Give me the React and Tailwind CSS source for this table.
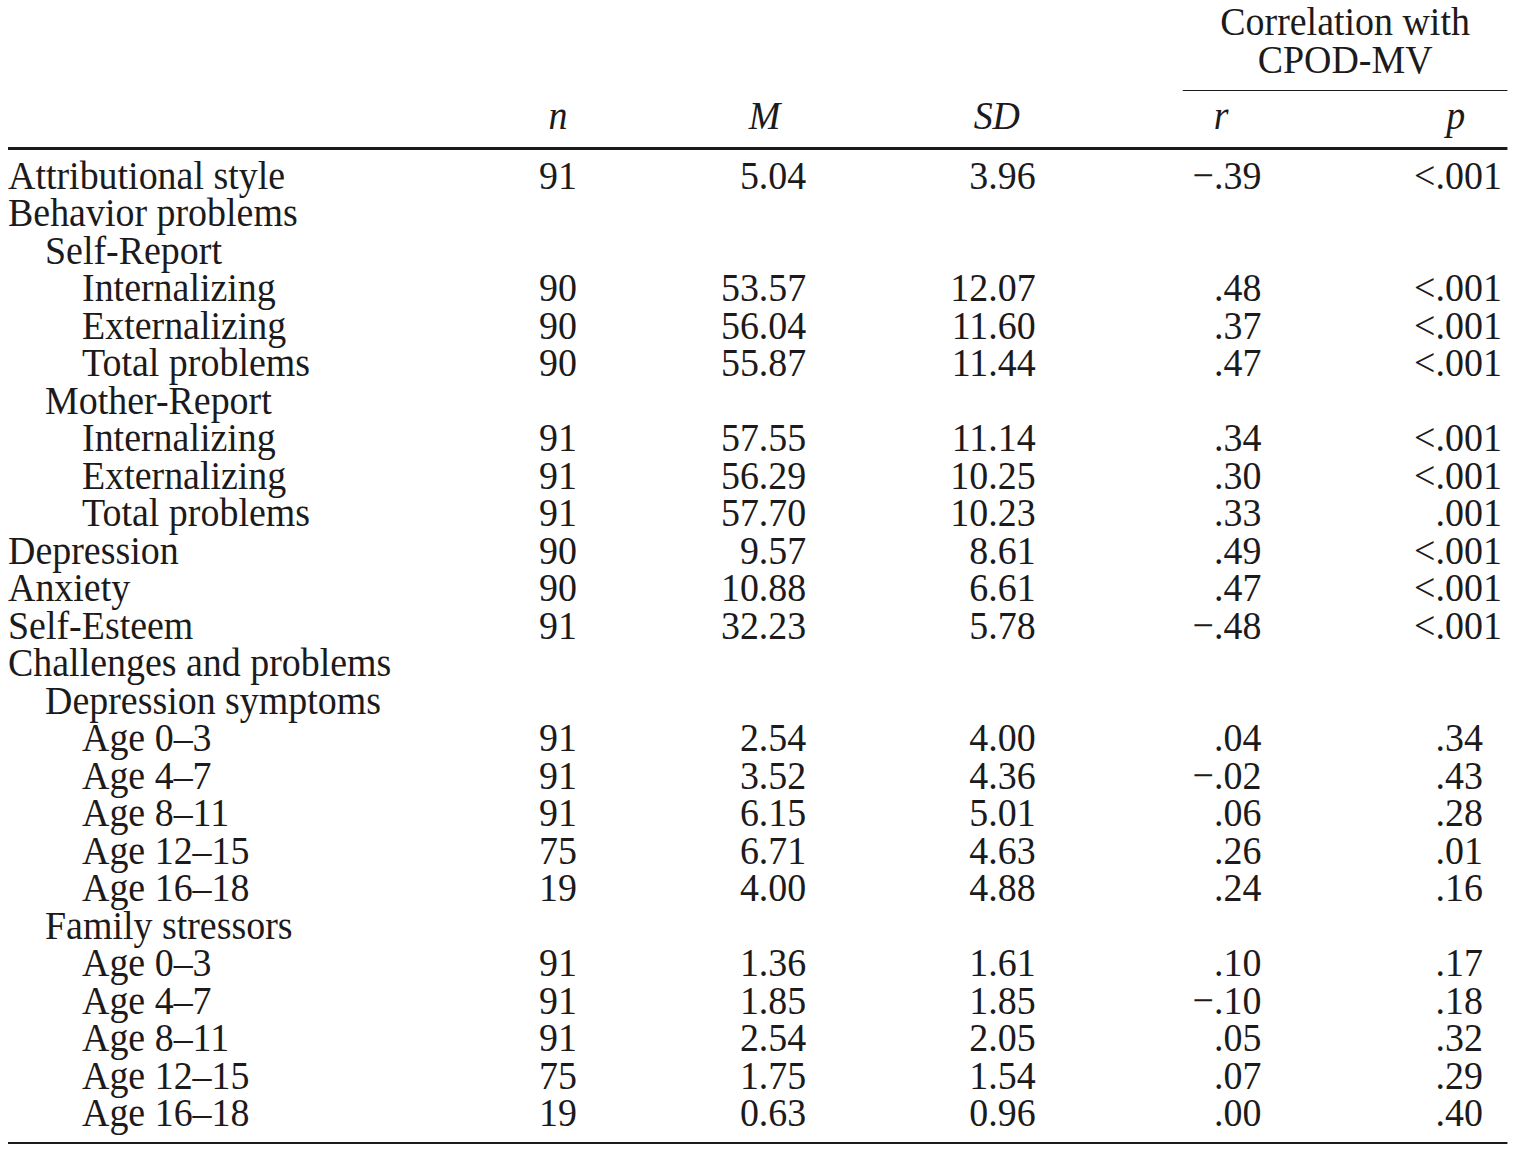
const rows = [
  ["Attributional style", 0, "91", "5.04", "3.96", "−.39", "<.001"],
  ["Behavior problems", 0],
  ["Self-Report", 1],
  ["Internalizing", 2, "90", "53.57", "12.07", ".48", "<.001"],
  ["Externalizing", 2, "90", "56.04", "11.60", ".37", "<.001"],
  ["Total problems", 2, "90", "55.87", "11.44", ".47", "<.001"],
  ["Mother-Report", 1],
  ["Internalizing", 2, "91", "57.55", "11.14", ".34", "<.001"],
  ["Externalizing", 2, "91", "56.29", "10.25", ".30", "<.001"],
  ["Total problems", 2, "91", "57.70", "10.23", ".33", ".001"],
  ["Depression", 0, "90", "9.57", "8.61", ".49", "<.001"],
  ["Anxiety", 0, "90", "10.88", "6.61", ".47", "<.001"],
  ["Self-Esteem", 0, "91", "32.23", "5.78", "−.48", "<.001"],
  ["Challenges and problems", 0],
  ["Depression symptoms", 1],
  ["Age 0–3", 2, "91", "2.54", "4.00", ".04", ".34"],
  ["Age 4–7", 2, "91", "3.52", "4.36", "−.02", ".43"],
  ["Age 8–11", 2, "91", "6.15", "5.01", ".06", ".28"],
  ["Age 12–15", 2, "75", "6.71", "4.63", ".26", ".01"],
  ["Age 16–18", 2, "19", "4.00", "4.88", ".24", ".16"],
  ["Family stressors", 1],
  ["Age 0–3", 2, "91", "1.36", "1.61", ".10", ".17"],
  ["Age 4–7", 2, "91", "1.85", "1.85", "−.10", ".18"],
  ["Age 8–11", 2, "91", "2.54", "2.05", ".05", ".32"],
  ["Age 12–15", 2, "75", "1.75", "1.54", ".07", ".29"],
  ["Age 16–18", 2, "19", "0.63", "0.96", ".00", ".40"],
];

const indent = ["pl-0", "pl-[40px]", "pl-[80px]"];

function Cell({ width, children, center }) {
  return (
    <div className="flex justify-end">
      <div className={`${width} ${center ? "text-center" : "text-right"}`}>
        {children}
      </div>
    </div>
  );
}

function Row({ label, level, n, m, sd, r, p }) {
  // two-digit p values line up on the decimal point of the .001 ones
  const short = p && !p.includes("001");
  return (
    <div className="grid grid-cols-[500px_115px_248px_248px_244px_266px]">
      <div className={`whitespace-nowrap ${indent[level]}`}>{label}</div>
      <Cell width="w-[41px]">{n}</Cell>
      <Cell width="w-[113px]">{m}</Cell>
      <Cell width="w-[113px]">{sd}</Cell>
      <Cell width="w-[87px]">{r}</Cell>
      <div className="flex justify-end pr-[6px]">
        <div className={`w-[96px] text-right ${short ? "pr-[0.5em]" : ""}`}>{p}</div>
      </div>
    </div>
  );
}

export default function App() {
  return (
    <div className="w-full min-h-screen overflow-hidden bg-white">
      <div
        className="ml-2 w-[1621px] origin-left scale-x-[0.925] pt-[3px] text-[41px] leading-[37.5px] text-[#1c1a1b]"
        style={{ fontFamily: '"Liberation Serif", "Times New Roman", serif' }}
      >
        <div className="flex justify-end">
          <div className="w-[351px] border-b border-[#1c1a1b] pb-[12px] text-center">
            <div>Correlation with</div>
            <div>CPOD-MV</div>
          </div>
        </div>

        <div className="mt-[6px] grid grid-cols-[500px_115px_248px_248px_244px_266px] border-b-[3px] border-[#1c1a1b] pb-[12px] italic">
          <div />
          <Cell width="w-[41px]" center>n</Cell>
          <Cell width="w-[90px]" center>M</Cell>
          <Cell width="w-[84px]" center>SD</Cell>
          <Cell width="w-[87px]" center>r</Cell>
          <div className="flex justify-end pr-[6px]">
            <div className="w-[100px] text-center">p</div>
          </div>
        </div>

        <div className="border-b-2 border-[#1c1a1b] pt-[7px] pb-[10px]">
          {rows.map((row, i) => (
            <Row
              key={i}
              label={row[0]}
              level={row[1]}
              n={row[2]}
              m={row[3]}
              sd={row[4]}
              r={row[5]}
              p={row[6]}
            />
          ))}
        </div>
      </div>
    </div>
  );
}
